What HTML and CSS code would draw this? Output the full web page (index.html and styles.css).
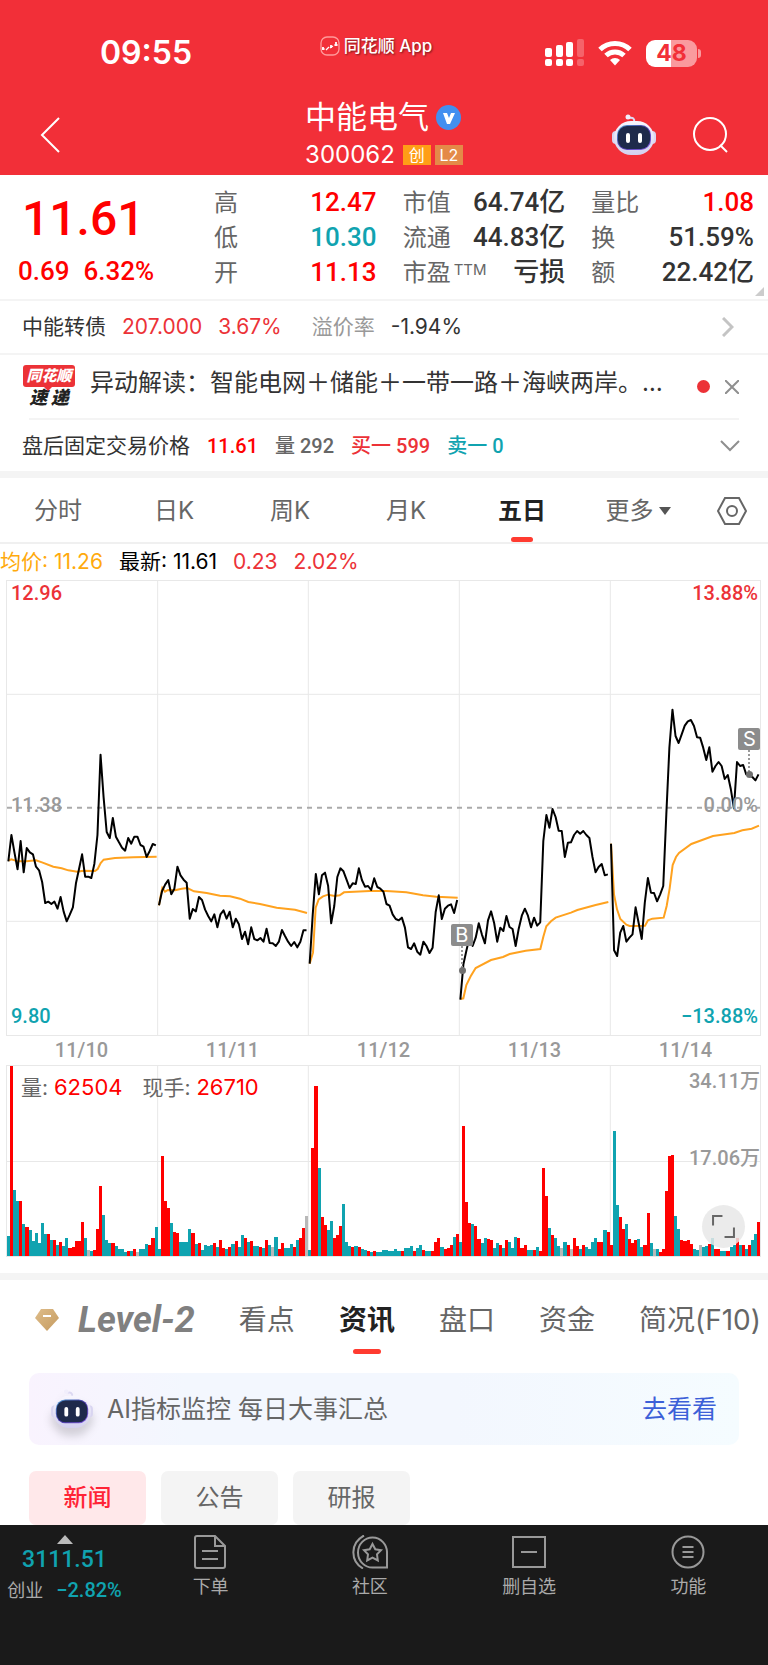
FILE: index.html
```html
<!DOCTYPE html>
<html lang="zh-CN">
<head>
    <meta charset="UTF-8">
    <meta name="viewport" content="width=device-width, initial-scale=1.0">
    <title>中能电气 300062</title>
    <link rel="stylesheet" href="styles.css">
</head>
<body>
    <!-- Shared shapes -->
    <svg class="defs" aria-hidden="true">
        <defs>
            <linearGradient id="shell" x1="0" y1="0" x2="0" y2="1">
                <stop offset="0" stop-color="#f8f6fe"/>
                <stop offset="1" stop-color="#d3d0ee"/>
            </linearGradient>
            <linearGradient id="rim" x1="0" y1="0" x2="1" y2="1">
                <stop offset="0" stop-color="#4f9fd0"/>
                <stop offset="0.5" stop-color="#4a3aa8"/>
                <stop offset="1" stop-color="#8a63e6"/>
            </linearGradient>
            <linearGradient id="gold" x1="0" y1="0" x2="1" y2="1">
                <stop offset="0" stop-color="#dfbd8a"/>
                <stop offset="1" stop-color="#c49a5f"/>
            </linearGradient>
        </defs>
        <symbol id="robot" viewBox="0 0 44 42">
            <path d="M22 8c1-3-1-5-5-4" fill="none" stroke="#dcd8f2" stroke-width="2"/>
            <circle cx="16" cy="3" r="2.500" fill="#f1eefb"/>
            <rect x="0" y="17" width="8" height="13" rx="4" fill="#d9d5f1"/>
            <rect x="36" y="17" width="8" height="13" rx="4" fill="#d9d5f1"/>
            <rect x="2" y="7" width="40" height="34" rx="17" fill="url(#shell)"/>
            <rect x="5" y="11" width="34" height="25" rx="10" fill="url(#rim)"/>
            <rect x="6" y="12" width="32" height="23" rx="9" fill="#1e2a4b"/>
            <rect x="14" y="19" width="4" height="10" rx="2" fill="#fff"/>
            <rect x="26" y="19" width="4" height="10" rx="2" fill="#fff"/>
        </symbol>
    </svg>

    <header class="header">
        <div class="status-bar">
            <span class="clock">09:55</span>
            <span class="app-name">
                <svg width="20" height="20" viewBox="0 0 20 20" fill="none" stroke="#fff">
                    <rect x="1" y="1" width="18" height="18" rx="6" stroke="#ff9a9a" stroke-width="1.300"/>
                    <path d="M2 13h3M6 14l3-3M10 12l3-2M14 9h4" stroke-width="1.200"/>
                    <path d="M16 6v4M11 9v3M3 11v3" stroke-width="1.800"/>
                </svg>
                同花顺 App
            </span>
            <span class="status-icons">
                <svg width="39" height="28" viewBox="0 0 39 28" fill="#fff">
                    <rect x="0" y="9" width="7" height="9" rx="2"/>
                    <rect x="11" y="6" width="7" height="12" rx="2"/>
                    <rect x="21" y="3" width="7" height="15" rx="2"/>
                    <rect x="32" y="0" width="7" height="18" rx="2" opacity=".25"/>
                    <rect x="0" y="20" width="7" height="7" rx="2"/>
                    <rect x="11" y="20" width="7" height="7" rx="2"/>
                    <rect x="21" y="20" width="7" height="7" rx="2"/>
                    <rect x="32" y="20" width="7" height="7" rx="2" opacity=".25"/>
                </svg>
                <svg width="34" height="26" viewBox="0 0 34 26" fill="none" stroke="#fff" stroke-width="5">
                    <path d="M2 9.500a21.500 21.500 0 0 1 30 0"/>
                    <path d="M8 15.500a13 13 0 0 1 18 0"/>
                    <path d="M17 25.500l-5-5.500a7.500 7.500 0 0 1 10 0z" fill="#fff" stroke="none"/>
                </svg>
                <span class="battery">48</span>
            </span>
        </div>
        <nav class="nav">
            <button class="icon-btn" aria-label="返回">
                <svg width="20" height="36" viewBox="0 0 20 36" fill="none" stroke="#fff" stroke-width="2">
                    <path d="M19 1L2 18l17 17"/>
                </svg>
            </button>
            <div class="title">
                <h1>中能电气
                    <svg width="25" height="25" viewBox="0 0 25 25">
                        <circle cx="12.500" cy="12.500" r="12.500" fill="#428ff0"/>
                        <path d="M7 8h4l2 5 2-5h4l-5 11h-3z" fill="#fff"/>
                    </svg>
                </h1>
                <p>300062 <span class="tag">创</span><span class="tag tag-l2">L2</span></p>
            </div>
            <div class="nav-right">
                <button class="icon-btn" aria-label="智能助手">
                    <svg width="44" height="42"><use href="#robot"/></svg>
                </button>
                <button class="icon-btn" aria-label="搜索">
                    <svg width="36" height="36" viewBox="0 0 36 36" fill="none" stroke="#fff" stroke-width="2">
                        <circle cx="18" cy="17" r="16"/>
                        <path d="M28 28l7 7"/>
                    </svg>
                </button>
            </div>
        </nav>
    </header>

    <section class="quote">
        <div class="price">
            <strong>11.61</strong>
            <div><span>0.69</span><span>6.32%</span></div>
        </div>
        <dl>
            <div><dt>高</dt><dd class="up">12.47</dd></div>
            <div><dt>低</dt><dd class="down">10.30</dd></div>
            <div><dt>开</dt><dd class="up">11.13</dd></div>
        </dl>
        <dl>
            <div><dt>市值</dt><dd>64.74亿</dd></div>
            <div><dt>流通</dt><dd>44.83亿</dd></div>
            <div><dt>市盈<sup>TTM</sup></dt><dd>亏损</dd></div>
        </dl>
        <dl>
            <div><dt>量比</dt><dd class="up">1.08</dd></div>
            <div><dt>换</dt><dd>51.59%</dd></div>
            <div><dt>额</dt><dd>22.42亿</dd></div>
        </dl>
    </section>

    <a class="bond" href="#">
        <span>中能转债</span>
        <span class="red">207.000</span>
        <span class="red">3.67%</span>
        <span class="muted">溢价率</span>
        <span>-1.94%</span>
        <svg class="push" width="12" height="20" viewBox="0 0 12 20" fill="none" stroke="#c4c4c4" stroke-width="3">
            <path d="M1 1l9 9-9 9"/>
        </svg>
    </a>

    <div class="express">
        <div class="express-logo"><b>同花顺</b><i>速 递</i></div>
        <p>异动解读：智能电网＋储能＋一带一路＋海峡两岸。…</p>
        <span class="dot"></span>
        <button class="icon-btn" aria-label="关闭">
            <svg width="14" height="14" viewBox="0 0 14 14" stroke="#8f8f8f" stroke-width="2">
                <path d="M0 0l14 14M14 0L0 14"/>
            </svg>
        </button>
    </div>

    <div class="after-hours">
        <span>盘后固定交易价格</span>
        <b class="up">11.61</b>
        <b class="gray">量 292</b>
        <b class="red">买一 599</b>
        <b class="down">卖一 0</b>
        <svg class="push" width="20" height="12" viewBox="0 0 20 12" fill="none" stroke="#8f8f8f" stroke-width="2">
            <path d="M1 1l9 9 9-9"/>
        </svg>
    </div>

    <div class="periods">
        <button>分时</button>
        <button>日K</button>
        <button>周K</button>
        <button>月K</button>
        <button class="active">五日</button>
        <button>更多<span class="caret"></span></button>
        <button aria-label="设置">
            <svg width="30" height="28" viewBox="0 0 30 28" fill="none" stroke="#666" stroke-width="2">
                <path d="M8 1h14l7 13-7 13H8L1 14z"/>
                <circle cx="15" cy="14" r="5"/>
            </svg>
        </button>
    </div>

    <div class="legend">
        <span class="avg">均价: 11.26</span>
        <span class="last">最新: 11.61</span>
        <span>0.23</span>
        <span>2.02%</span>
    </div>

    <div class="chart price-chart">
        <svg viewBox="0 0 2259 1362" preserveAspectRatio="none">
            <path class="grid-line" d="M0 340H2259M0 1021H2259M452 0V1362M904 0V1362M1357 0V1362M1810 0V1362"/>
            <path class="mid-line" d="M0 680H2259"/>
            <g id="averages"></g>
            <g id="prices"></g>
        </svg>
        <span class="label top-left red">12.96</span>
        <span class="label top-right red">13.88%</span>
        <span class="label mid-left">11.38</span>
        <span class="label mid-right">0.00%</span>
        <span class="label bottom-left down">9.80</span>
        <span class="label bottom-right down">−13.88%</span>
        <span class="marker marker-buy">B</span>
        <span class="marker marker-sell">S</span>
    </div>

    <div class="dates">
        <span>11/10</span><span>11/11</span><span>11/12</span><span>11/13</span><span>11/14</span>
    </div>

    <div class="chart volume-chart">
        <svg viewBox="0 0 2259 573" preserveAspectRatio="none">
            <path class="grid-line" d="M0 288H2259M452 0V573M904 0V573M1357 0V573M1810 0V573"/>
            <g id="volumes" shape-rendering="crispEdges"></g>
        </svg>
        <p class="volume-info">量: <span>62504</span> 现手: <span>26710</span></p>
        <span class="label volume-max">34.11万</span>
        <span class="label volume-mid">17.06万</span>
        <button class="expand" aria-label="全屏">
            <svg viewBox="0 0 22 22" fill="none" stroke="#666">
                <path d="M1 10V1h9M21 12v9h-9"/>
            </svg>
        </button>
    </div>

    <div class="info-tabs">
        <button class="level2">
            <svg width="24" height="24" viewBox="0 0 24 24">
                <path d="M6 1h12l6 9-12 13L0 10z" fill="url(#gold)"/>
                <path d="M8 8h8" stroke="#fff" stroke-width="2"/>
            </svg>
            Level-2
        </button>
        <button>看点</button>
        <button class="active">资讯</button>
        <button>盘口</button>
        <button>资金</button>
        <button>简况(F10)</button>
    </div>

    <a class="banner" href="#">
        <svg width="42" height="40"><use href="#robot"/></svg>
        <span>AI指标监控 每日大事汇总</span>
        <em>去看看</em>
    </a>

    <div class="chips">
        <button class="active">新闻</button>
        <button>公告</button>
        <button>研报</button>
    </div>

    <footer class="toolbar">
        <a class="index" href="#">
            <span class="caret-up"></span>
            <strong>3111.51</strong>
            <span>创业 <b>−2.82%</b></span>
        </a>
        <a href="#">
            <svg width="34" height="34" viewBox="0 0 34 34">
                <path d="M21 1H3a2 2 0 0 0-2 2v28a2 2 0 0 0 2 2h26a2 2 0 0 0 2-2V11zM21 1v10h10M8 16h16M8 24h16"/>
            </svg>
            下单
        </a>
        <a href="#">
            <svg width="36" height="34" viewBox="0 0 36 34">
                <path d="M35 32V18A14.500 15 0 1 0 21 32.500h14zM12 0.500C-2 8-2 26 11 33.500"/>
                <path d="M20.500 9l2.800 5.300 5.700.9-4 4.200.8 6-5.300-2.700-5.300 2.700.8-6-4-4.200 5.700-.9z"/>
            </svg>
            社区
        </a>
        <a href="#">
            <svg width="34" height="34" viewBox="0 0 34 34">
                <path d="M1 2h32v30H1zM9 17h16"/>
            </svg>
            删自选
        </a>
        <a href="#">
            <svg width="34" height="34" viewBox="0 0 34 34">
                <circle cx="17" cy="17" r="15.500"/>
                <path d="M11.500 12h11M11.500 17h11M11.500 22h11"/>
            </svg>
            功能
        </a>
    </footer>

    <script src="chart.js"></script>
</body>
</html>
```
FILE: styles.css
```css
* {
    box-sizing: border-box;
}

body {
    margin: 0;
    font-family: Inter, "Noto Sans CJK SC", sans-serif;
    font-size: 21px;
    line-height: 28px;
    color: #333;
    background-color: #fff;
}

button {
    font: inherit;
    color: inherit;
    background: none;
    border: none;
    padding: 0;
    cursor: pointer;
}

a {
    color: inherit;
    text-decoration: none;
}

svg {
    display: block;
    flex-shrink: 0;
}

h1, p, dl, dd {
    margin: 0;
}

.defs {
    position: absolute;
    width: 0;
    height: 0;
}

.up {
    color: #f00;
}

.down {
    color: #10a3b0;
}

.red {
    color: #ec3237;
}

.muted {
    color: #999;
}

.gray {
    color: #666;
}

.push {
    margin-left: auto;
}

/* Header */
.header {
    background-color: #f22f38;
    color: #fff;
    height: 175px;
}

.status-bar {
    display: grid;
    grid-template-columns: 1fr auto 1fr;
    align-items: center;
    height: 97px;
    padding: 9px 71px 0 55px;
}

.clock {
    margin-left: 45px;
    font-size: 32px;
    font-weight: 600;
}

.app-name {
    display: flex;
    align-items: center;
    gap: 4px;
    padding-bottom: 14px;
    font-size: 17px;
    font-weight: 500;
    text-shadow: 1px 1px 2px rgba(0, 0, 0, 0.5);
}

.status-icons {
    display: flex;
    align-items: center;
    justify-content: flex-end;
    gap: 14px;
}

.battery {
    position: relative;
    width: 51px;
    height: 27px;
    border-radius: 9px;
    background: linear-gradient(to right, #fff 49%, #fa9a9e 49%);
    color: #f22f38;
    font-size: 23px;
    font-weight: 700;
    line-height: 27px;
    text-align: center;
}

.battery::after {
    content: "";
    position: absolute;
    left: 52px;
    top: 9px;
    width: 3px;
    height: 9px;
    border-radius: 0 3px 3px 0;
    background-color: #fa9a9e;
}

.nav {
    display: grid;
    grid-template-columns: 1fr auto 1fr;
    align-items: center;
    padding: 0 40px;
}

.icon-btn {
    justify-self: start;
}

.title {
    text-align: center;
}

.title h1 {
    display: flex;
    align-items: center;
    gap: 7px;
    font-size: 31px;
    font-weight: 400;
    line-height: 40px;
}

.title p {
    display: flex;
    align-items: center;
    justify-content: center;
    gap: 4px;
    font-size: 24px;
    line-height: 36px;
}

.tag {
    width: 28px;
    margin-left: 4px;
    background-color: #ff9e16;
    font-size: 16px;
    line-height: 20px;
}

.tag-l2 {
    margin-left: 0;
    background-color: #e48a48;
}

.nav-right {
    display: flex;
    justify-content: flex-end;
    align-items: center;
    gap: 36px;
}

/* Quote */
.quote {
    position: relative;
    display: grid;
    grid-template-columns: 170px repeat(3, 1fr);
    column-gap: 26px;
    padding: 10px 14px 9px 18px;
    border-bottom: 2px solid #f4f4f4;
}

.quote::after {
    content: "";
    position: absolute;
    right: 4px;
    bottom: 3px;
    border-left: 9px solid transparent;
    border-bottom: 9px solid #ccc;
}

.price {
    color: #f00;
    font-family: Roboto, "Noto Sans CJK SC", sans-serif;
    font-weight: 500;
}

.price strong {
    display: block;
    margin-left: 4px;
    font-size: 48px;
    font-weight: 500;
    line-height: 68px;
}

.price div {
    display: flex;
    gap: 14px;
    font-size: 26px;
    line-height: 36px;
}

.quote dl div {
    display: flex;
    justify-content: space-between;
    font-size: 24px;
    line-height: 35px;
}

.quote dt {
    color: #666;
}

.quote dd {
    font-family: Roboto, "Noto Sans CJK SC", sans-serif;
    font-size: 26px;
    font-weight: 500;
}

.quote sup {
    font-size: 15px;
    line-height: 16px;
    margin-left: 3px;
    vertical-align: 6px;
}

/* Rows under the quote */
.bond {
    display: flex;
    align-items: center;
    gap: 16px;
    height: 54px;
    padding: 0 34px 0 22px;
    border-bottom: 2px solid #f4f4f4;
}

.bond .muted {
    margin-left: 14px;
}

.express {
    display: flex;
    align-items: center;
    gap: 15px;
    height: 65px;
    margin: 0 29px;
    border-bottom: 2px solid #f4f4f4;
}

.express-logo {
    width: 52px;
    margin-left: -6px;
    text-align: center;
    font-style: italic;
    font-weight: 900;
}

.express-logo b {
    position: relative;
    display: block;
    border-radius: 3px;
    background-color: #ec3237;
    color: #fff;
    font-size: 15px;
    line-height: 22px;
}

.express-logo b::after {
    content: "";
    position: absolute;
    top: 22px;
    left: 21px;
    border: 4px solid transparent;
    border-top-color: #ec3237;
    border-bottom: 0;
}

.express-logo i {
    display: block;
    font-size: 18px;
    line-height: 22px;
    color: #222;
}

.express p {
    flex: 1;
    padding-bottom: 8px;
    white-space: nowrap;
    font-size: 24px;
    line-height: 36px;
}

.dot {
    width: 13px;
    height: 13px;
    border-radius: 50%;
    background-color: #ec3237;
}

.after-hours {
    display: flex;
    align-items: center;
    gap: 17px;
    height: 51px;
    padding: 0 28px 0 22px;
}

.after-hours b {
    font-family: Roboto, "Noto Sans CJK SC", sans-serif;
    font-size: 20px;
    font-weight: 500;
}

/* Period tabs */
.periods {
    display: grid;
    grid-template-columns: repeat(6, 1fr) 72px;
    height: 73px;
    border-top: 7px solid #f4f4f4;
    border-bottom: 2px solid #f0f0f0;
    color: #666;
    font-size: 24px;
}

.periods button,
.info-tabs button {
    position: relative;
    display: flex;
    align-items: center;
    justify-content: center;
}

.periods button {
    padding-top: 2px;
}

.active::after {
    content: "";
    position: absolute;
    bottom: 0;
    left: 50%;
    width: 22px;
    height: 5px;
    margin-left: -11px;
    border-radius: 3px;
    background-color: #ff3b30;
}

.periods .active,
.info-tabs .active {
    color: #222;
    font-weight: 700;
}

.caret {
    margin-left: 5px;
    border: 6px solid transparent;
    border-top: 8px solid #555;
    border-bottom: 0;
}

/* Charts */
.legend {
    display: flex;
    gap: 16px;
    height: 36px;
    color: #ec3237;
    font-size: 21px;
    line-height: 36px;
}

.legend .avg {
    color: #ffaa0d;
}

.legend .last {
    color: #000;
}

.chart {
    position: relative;
    margin: 0 7px 0 6px;
    border: 1px solid #e8e8e8;
}

.chart svg {
    width: 100%;
    height: 100%;
}

.price-chart {
    height: 456px;
}

.volume-chart {
    height: 192px;
    margin-bottom: 16px;
}

.chart path,
.chart polyline {
    fill: none;
    vector-effect: non-scaling-stroke;
}

.grid-line {
    stroke: #e8e8e8;
}

.mid-line {
    stroke: #aaa;
    stroke-width: 2;
    stroke-dasharray: 5 5;
}

#prices {
    stroke: #000;
    stroke-width: 2;
    stroke-linejoin: round;
}

#averages {
    stroke: #ffa21f;
    stroke-width: 2;
}

.label {
    position: absolute;
    color: #999;
    font-family: Roboto, "Noto Sans CJK SC", sans-serif;
    font-size: 20px;
    font-weight: 500;
    line-height: 24px;
}

.label.red {
    color: #ec3237;
}

.label.down {
    color: #10a3b0;
}

.top-left,
.mid-left,
.bottom-left {
    left: 4px;
}

.top-right,
.mid-right,
.bottom-right {
    right: 2px;
}

.top-left,
.top-right {
    top: 0;
}

.mid-left,
.mid-right {
    top: 50%;
    margin-top: -15px;
}

.bottom-left,
.bottom-right {
    bottom: 7px;
}

.marker {
    position: absolute;
    width: 22px;
    margin-left: -11px;
    border-radius: 2px;
    background-color: #8c8c8c;
    color: #fff;
    font-size: 20px;
    line-height: 22px;
    text-align: center;
}

.marker::before {
    content: "";
    position: absolute;
    top: 22px;
    left: 10px;
    height: 22px;
    border-left: 2px dotted #999;
}

.marker::after {
    content: "";
    position: absolute;
    top: 43px;
    left: 8px;
    width: 7px;
    height: 7px;
    border-radius: 50%;
    background-color: #707070;
}

.marker-buy {
    left: 60.4%;
    top: 75.6%;
}

.marker-sell {
    left: 98.6%;
    top: 32.4%;
}

.dates {
    display: grid;
    grid-template-columns: repeat(5, 1fr);
    margin: 0 7px 0 6px;
    color: #999;
    font-family: Roboto, sans-serif;
    font-size: 20px;
    font-weight: 500;
    line-height: 29px;
    text-align: center;
}

.volume-info {
    position: absolute;
    top: 7px;
    left: 14px;
    color: #666;
    font-size: 21px;
    white-space: nowrap;
}

.volume-info span {
    margin-right: 14px;
    color: #f00;
    font-size: 22px;
}

.volume-max,
.volume-mid {
    right: 0;
}

.volume-max {
    top: 3px;
}

.volume-mid {
    top: 80px;
}

.expand {
    position: absolute;
    right: 15px;
    bottom: 8px;
    width: 43px;
    height: 43px;
    padding: 10px;
    border-radius: 50%;
    background-color: rgba(232, 232, 232, 0.85);
}

.expand svg {
    stroke-width: 2;
}

/* Bottom content */
.info-tabs {
    display: flex;
    gap: 44px;
    height: 81px;
    padding-left: 35px;
    border-top: 7px solid #f4f4f4;
    overflow: hidden;
    color: #666;
    font-size: 28px;
    white-space: nowrap;
}

.info-tabs button {
    padding-top: 6px;
}

.info-tabs .active::after {
    width: 28px;
    margin-left: -14px;
}

.info-tabs .level2 {
    gap: 19px;
    color: #808080;
    font-family: Roboto, sans-serif;
    font-size: 36px;
    font-style: italic;
    font-weight: 700;
}

.banner {
    display: flex;
    align-items: center;
    gap: 14px;
    height: 72px;
    margin: 19px 29px 26px;
    padding: 0 22px;
    border-radius: 10px;
    background: linear-gradient(to right, #f9f3fe, #f3f7fe 22%, #f3f7fe 60%, #f5fcff);
    color: #666;
    font-size: 25px;
}

.banner svg {
    filter: drop-shadow(0 8px 4px rgba(0, 0, 0, 0.15));
}

.banner em {
    margin-left: auto;
    color: #3c60d8;
    font-style: normal;
}

.chips {
    display: flex;
    gap: 15px;
    padding: 0 29px;
}

.chips button {
    width: 117px;
    height: 54px;
    border-radius: 7px;
    background-color: #f4f4f4;
    color: #666;
    font-size: 24px;
}

.chips .active {
    background-color: #ffe8ea;
    color: #ff2436;
    font-weight: 500;
}

.chips .active::after {
    content: none;
}

/* Toolbar */
.toolbar {
    display: grid;
    grid-template-columns: 131px repeat(4, 1fr);
    height: 140px;
    padding-top: 10px;
    background-color: #1a1a1a;
    color: #aaa;
    font-size: 18px;
}

.toolbar a {
    display: flex;
    flex-direction: column;
    align-items: center;
    gap: 4px;
}

.toolbar svg {
    fill: none;
    stroke: #999;
    stroke-width: 2;
}

.toolbar .index {
    gap: 0;
    padding-right: 2px;
}

.caret-up {
    border: 8px solid transparent;
    border-top: 0;
    border-bottom: 9px solid #bbb;
}

.index strong,
.index b {
    color: #10a3b0;
    font-family: Roboto, sans-serif;
    font-weight: 500;
}

.index strong {
    font-size: 23px;
    line-height: 32px;
}

.index b {
    margin-left: 8px;
    font-size: 20px;
}
```
FILE: chart.js
```js
const STEP = 9.22;
const DAY = 452;

// One price every 5 minutes, as a y position on the chart
const prices = [
    [841, 762, 815, 865, 780, 874, 801, 814, 820, 857, 868, 903, 966, 962, 969, 962, 983, 948, 992, 1021, 1001, 979, 907, 864, 820, 887, 887, 891, 848, 762, 521, 649, 753, 771, 711, 767, 784, 800, 809, 771, 788, 767, 767, 792, 797, 828, 810, 789, 793],
    [973, 930, 911, 897, 940, 923, 857, 883, 896, 905, 1013, 984, 991, 948, 957, 986, 1005, 1021, 1000, 1039, 1000, 988, 1013, 992, 1039, 1013, 1030, 1074, 1052, 1090, 1039, 1074, 1078, 1071, 1082, 1043, 1086, 1087, 1095, 1082, 1047, 1065, 1082, 1095, 1083, 1099, 1082, 1048, 1048],
    [1148, 1000, 879, 940, 883, 875, 914, 1027, 975, 888, 862, 871, 896, 921, 907, 909, 862, 897, 917, 915, 927, 892, 918, 923, 932, 969, 974, 1000, 1014, 1018, 1010, 1040, 1099, 1104, 1087, 1112, 1121, 1082, 1095, 1116, 1100, 993, 943, 1014, 983, 974, 970, 996, 957],
    [1256, 1150, 1108, 1068, 1095, 1070, 1027, 1060, 1087, 1018, 991, 1026, 1082, 1040, 1050, 1005, 1038, 1044, 1095, 1043, 1004, 983, 1004, 1039, 1010, 1034, 1024, 780, 702, 740, 684, 708, 749, 750, 828, 785, 784, 762, 750, 758, 750, 762, 771, 828, 874, 858, 849, 883, 880],
    [788, 1108, 1125, 1055, 1035, 1082, 1070, 1060, 979, 1026, 1074, 965, 891, 935, 936, 961, 940, 915, 700, 500, 386, 465, 486, 460, 434, 421, 417, 435, 469, 470, 500, 537, 499, 572, 555, 543, 555, 594, 582, 625, 682, 543, 555, 552, 580, 583, 588, 598, 580]
];

// Average price: x from the start of the day, y
const averages = [
    '4,839 13,835 32,841 59,841 87,838 105,844 139,857 164,862 184,868 211,872 229,869 264,870 272,864 281,846 290,836 324,831 379,829 449,827',
    '4,973 9,945 14,921 22,932 31,927 52,928 72,923 89,921 109,931 147,936 187,944 217,946 247,953 272,963 307,969 357,980 412,986 448,996',
    '4,1148 14,1115 22,980 31,955 44,946 59,941 79,945 94,943 107,934 184,930 234,930 294,934 344,943 384,947 448,950',
    '4,1254 13,1252 22,1212 35,1186 50,1161 96,1137 132,1128 152,1119 200,1109 244,1104 253,1067 262,1036 276,1021 290,1010 336,995 355,987 410,972 448,963',
    '4,788 13,940 22,985 32,1014 50,1031 60,1035 106,1034 115,1018 128,1013 162,1010 171,975 180,922 189,852 199,828 208,816 245,789 310,765 374,756 398,748 426,743 448,734'
];

// Volume bars: r = up, t = down, g = flat
const volumes = [
    't61 r573 t200 t166 r166 t98 r88 t79 t45 t68 t39 t101 t65 r65 t48 r48 t32 r42 t30 t53 r23 r28 r44 r45 r104 t54 g19 t15 r18 r80 r210 t124 t49 t39 r38 t29 t20 t20 t13 r14 t14 r22 g12 t20 t21 t35 r32 r54 t86',
    't20 r302 r167 r144 t101 r73 r68 t42 t42 t43 t82 r70 t36 r39 t18 t32 t30 t33 r38 t27 r48 r25 t20 r28 t36 r45 t26 t62 r53 t43 r46 t31 t30 r26 t24 r48 t33 g27 t58 r20 r39 t23 t24 t35 r27 t47 r54 r84 g121',
    't18 r327 r513 t266 r119 r92 t79 t107 r54 r64 r89 t156 t42 t29 r27 t31 r28 t21 t17 r15 t13 r15 t12 t12 t17 t19 t16 t15 t21 t16 r16 t23 t24 t29 r16 t24 t32 r17 t14 t14 r15 r42 r54 t26 r20 r25 r32 t57 r66',
    't41 r393 r163 r100 t96 r91 r52 t40 t55 r52 r47 t25 t38 r34 t25 r48 t42 t24 t58 r54 r25 r32 t18 t18 r17 t27 r14 r265 r182 t83 r63 t54 t31 g24 t41 r34 g22 r54 r30 t20 r32 t27 t20 t42 t54 r43 r43 t78 r72',
    'r32 t376 t153 r119 r80 t96 r51 r38 r48 t51 t27 r32 r129 t39 g20 t20 r13 r20 r195 r301 r304 t122 t80 r49 r45 r47 r36 t22 t17 g33 t27 t31 r37 t54 r22 r22 t16 t14 r15 t26 t32 r53 t34 r34 t22 r33 t48 t66 r104'
];

const colors = { r: '#ff0000', t: '#10a3b0', g: '#b8b8b8' };

function add(parent, tag, attrs) {
    const el = document.createElementNS('http://www.w3.org/2000/svg', tag);
    for (const key in attrs) {
        el.setAttribute(key, attrs[key]);
    }
    document.getElementById(parent).appendChild(el);
}

prices.forEach((day, d) => {
    const points = day.map((y, i) => `${d * DAY + 4 + i * STEP},${y}`).join(' ');
    add('prices', 'polyline', { points: points });
});

averages.forEach((day, d) => {
    const points = day.split(' ').map(p => {
        const [x, y] = p.split(',').map(Number);
        return `${d * DAY + x},${y}`;
    }).join(' ');
    add('averages', 'polyline', { points: points });
});

volumes.forEach((day, d) => {
    day.split(' ').forEach((bar, i) => {
        const height = Number(bar.slice(1));
        add('volumes', 'rect', {
            x: d * DAY + i * STEP,
            y: 573 - height,
            width: STEP,
            height: height,
            fill: colors[bar[0]]
        });
    });
});
```
